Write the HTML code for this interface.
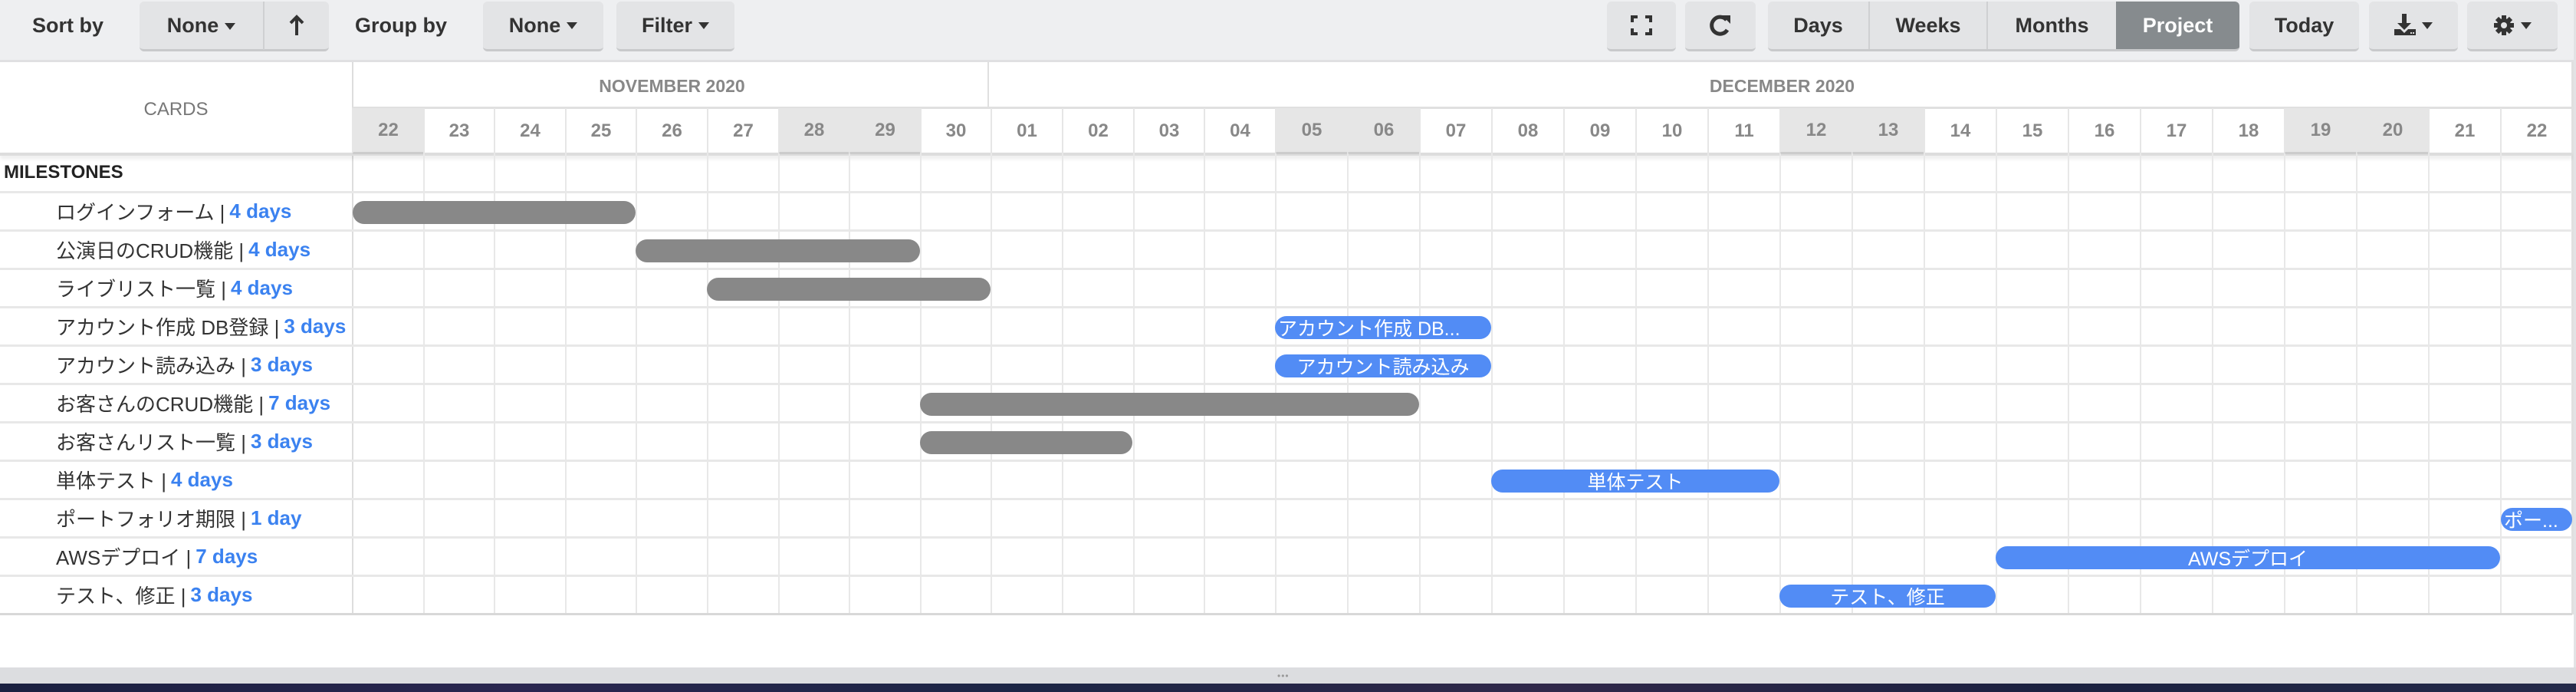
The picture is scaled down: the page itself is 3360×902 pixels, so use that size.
<!DOCTYPE html>
<html><head><meta charset="utf-8"><style>
*{box-sizing:border-box;margin:0;padding:0}
body{width:3360px;height:902px;overflow:hidden;background:#fff;font-family:"Liberation Sans","Noto Sans CJK JP",sans-serif;position:relative}
.a{position:absolute}
#tb{left:0;top:0;width:3360px;height:81px;background:#eeeff1;border-bottom:3px solid #e0e0e2}
.btn{position:absolute;top:2px;height:65px;background:#e3e4e6;border-radius:6px;border-bottom:3px solid #c8c9cb;font-size:27px;font-weight:bold;color:#333;display:flex;align-items:center;justify-content:center}
.lbl{position:absolute;top:18px;font-size:27px;font-weight:bold;color:#333}
.car{display:inline-block;width:0;height:0;border-left:7px solid transparent;border-right:7px solid transparent;border-top:9px solid #333;margin-left:8px;vertical-align:middle}
.hd{position:absolute;top:141px;height:60px;font-size:24px;font-weight:bold;color:#888;display:flex;align-items:center;justify-content:center;border-left:2px solid #e6e6e6}
.we{background:#e6e6e6;border-bottom:3px solid #ccc}
.vl{position:absolute;top:200px;height:601px;width:2px;background:#e8e8e8}
.hl{position:absolute;left:0;width:3355px;height:3px;background:#e8e8e8}
.row{position:absolute;left:73px;font-size:26px;color:#333;height:50px;display:flex;align-items:center}
.row b{color:#3b82f0;margin-left:6px}
.bar{position:absolute;height:30px;border-radius:15px;background:#888}
.bl{background:#528cf5;color:#fff;font-size:25px;display:flex;align-items:center;justify-content:center;white-space:nowrap;overflow:hidden}
</style></head><body>
<div id="tb" class="a"></div>
<div class="lbl" style="left:42px">Sort by</div>
<div class="btn" style="left:182px;width:247px;justify-content:flex-start">
 <span style="width:161px;text-align:center">None<span class="car"></span></span>
 <span style="width:2px;height:63px;background:#cfd0d2"></span>
 <span style="flex:1;display:flex;justify-content:center"><svg width="20" height="28" viewBox="0 0 20 28"><path d="M10 27V4M2 11l8-8 8 8" fill="none" stroke="#333" stroke-width="4"/></svg></span>
</div>
<div class="lbl" style="left:463px">Group by</div>
<div class="btn" style="left:630px;width:157px">None<span class="car"></span></div>
<div class="btn" style="left:804px;width:154px">Filter<span class="car"></span></div>

<div class="btn" style="left:2096px;width:90px"><svg width="28" height="26" viewBox="0 0 28 26"><path d="M2 9V2h7M19 2h7v7M26 17v7h-7M9 24H2v-7" fill="none" stroke="#333" stroke-width="4"/></svg></div>
<div class="btn" style="left:2198px;width:92px"><svg width="30" height="30" viewBox="0 0 30 30"><path d="M23 8A11 11 0 1 0 24 21" fill="none" stroke="#333" stroke-width="5"/><path d="M17 2h11v11z" fill="#333"/></svg></div>
<div class="btn" style="left:2306px;width:615px;justify-content:flex-start;overflow:hidden">
 <span style="width:131px;text-align:center">Days</span><span style="width:2px;height:63px;background:#cfd0d2"></span>
 <span style="width:152px;text-align:center">Weeks</span><span style="width:2px;height:63px;background:#cfd0d2"></span>
 <span style="width:167px;text-align:center">Months</span>
 <span style="width:161px;height:65px;background:#868b8e;color:#fff;display:flex;align-items:center;justify-content:center">Project</span>
</div>
<div class="btn" style="left:2934px;width:143px">Today</div>
<div class="btn" style="left:3090px;width:116px"><svg width="28" height="30" viewBox="0 0 28 30"><path d="M10 0h6v12h6l-9 9-9-9h6z" fill="#333"/><path d="M0 20h8l5 5 5-5h10v8H0z" fill="#333"/><rect x="21" y="24" width="2" height="2" fill="#ddd"/><rect x="24" y="24" width="2" height="2" fill="#ddd"/></svg><span class="car"></span></div>
<div class="btn" style="left:3218px;width:118px"><svg width="28" height="30" viewBox="0 0 28 28"><circle cx="14" cy="14" r="9" fill="#333"/><g stroke="#333" stroke-width="6"><path d="M14 1v26M1 14h26M5 5l18 18M23 5L5 23"/></g><circle cx="14" cy="14" r="4" fill="#e3e4e6"/></svg><span class="car"></span></div>

<div class="a" style="left:0;top:84px;width:459px;height:117px;display:flex;align-items:center;justify-content:center;font-size:24px;color:#777">CARDS</div>
<div class="a" style="left:459px;top:81px;width:2px;height:720px;background:#ddd"></div>
<div class="a" style="left:461px;top:84px;width:831px;height:57px;display:flex;align-items:center;justify-content:center;font-size:23px;font-weight:bold;color:#888">NOVEMBER 2020</div>
<div class="a" style="left:1288px;top:81px;width:2px;height:60px;background:#e0e0e0"></div>
<div class="a" style="left:1294px;top:84px;width:2061px;height:57px;display:flex;align-items:center;justify-content:center;font-size:23px;font-weight:bold;color:#888">DECEMBER 2020</div>
<div class="a" style="left:459px;top:139px;width:2896px;height:3px;background:#e0e0e0"></div>
<div class="a" style="left:3354px;top:81px;width:3px;height:720px;background:#e0e0e0"></div>
<div class="a" style="left:0;top:199px;width:3355px;height:4px;background:#ddd;box-shadow:0 3px 6px rgba(0,0,0,.12)"></div>

<div class="hd we" style="left:459px;width:93px">22</div>
<div class="hd" style="left:552px;width:92px">23</div>
<div class="hd" style="left:644px;width:93px">24</div>
<div class="hd" style="left:737px;width:92px">25</div>
<div class="hd" style="left:829px;width:93px">26</div>
<div class="hd" style="left:922px;width:93px">27</div>
<div class="hd we" style="left:1015px;width:92px">28</div>
<div class="hd we" style="left:1107px;width:93px">29</div>
<div class="hd" style="left:1200px;width:92px">30</div>
<div class="hd" style="left:1292px;width:93px">01</div>
<div class="hd" style="left:1385px;width:93px">02</div>
<div class="hd" style="left:1478px;width:92px">03</div>
<div class="hd" style="left:1570px;width:93px">04</div>
<div class="hd we" style="left:1663px;width:94px">05</div>
<div class="hd we" style="left:1757px;width:94px">06</div>
<div class="hd" style="left:1851px;width:94px">07</div>
<div class="hd" style="left:1945px;width:94px">08</div>
<div class="hd" style="left:2039px;width:94px">09</div>
<div class="hd" style="left:2133px;width:94px">10</div>
<div class="hd" style="left:2227px;width:94px">11</div>
<div class="hd we" style="left:2321px;width:94px">12</div>
<div class="hd we" style="left:2415px;width:94px">13</div>
<div class="hd" style="left:2509px;width:94px">14</div>
<div class="hd" style="left:2603px;width:94px">15</div>
<div class="hd" style="left:2697px;width:94px">16</div>
<div class="hd" style="left:2791px;width:94px">17</div>
<div class="hd" style="left:2885px;width:94px">18</div>
<div class="hd we" style="left:2979px;width:94px">19</div>
<div class="hd we" style="left:3073px;width:94px">20</div>
<div class="hd" style="left:3167px;width:94px">21</div>
<div class="hd" style="left:3261px;width:94px">22</div>

<div class="vl" style="left:552px"></div><div class="vl" style="left:644px"></div><div class="vl" style="left:737px"></div><div class="vl" style="left:829px"></div><div class="vl" style="left:922px"></div><div class="vl" style="left:1015px"></div><div class="vl" style="left:1107px"></div><div class="vl" style="left:1200px"></div><div class="vl" style="left:1292px"></div><div class="vl" style="left:1385px"></div><div class="vl" style="left:1478px"></div><div class="vl" style="left:1570px"></div><div class="vl" style="left:1663px"></div><div class="vl" style="left:1757px"></div><div class="vl" style="left:1851px"></div><div class="vl" style="left:1945px"></div><div class="vl" style="left:2039px"></div><div class="vl" style="left:2133px"></div><div class="vl" style="left:2227px"></div><div class="vl" style="left:2321px"></div><div class="vl" style="left:2415px"></div><div class="vl" style="left:2509px"></div><div class="vl" style="left:2603px"></div><div class="vl" style="left:2697px"></div><div class="vl" style="left:2791px"></div><div class="vl" style="left:2885px"></div><div class="vl" style="left:2979px"></div><div class="vl" style="left:3073px"></div><div class="vl" style="left:3167px"></div><div class="vl" style="left:3261px"></div>
<div class="hl" style="top:249px"></div><div class="hl" style="top:299px"></div><div class="hl" style="top:349px"></div><div class="hl" style="top:399px"></div><div class="hl" style="top:449px"></div><div class="hl" style="top:499px"></div><div class="hl" style="top:549px"></div><div class="hl" style="top:599px"></div><div class="hl" style="top:649px"></div><div class="hl" style="top:699px"></div><div class="hl" style="top:749px"></div>
<div class="hl" style="top:799px;background:#d8d8d8"></div>

<div class="a" style="left:5px;top:200px;height:50px;display:flex;align-items:center;font-size:24px;font-weight:bold;color:#222">MILESTONES</div>
<div class="row" style="top:250px">ログインフォーム |<b>4 days</b></div>
<div class="row" style="top:300px">公演日のCRUD機能 |<b>4 days</b></div>
<div class="row" style="top:350px">ライブリスト一覧 |<b>4 days</b></div>
<div class="row" style="top:400px">アカウント作成 DB登録 |<b>3 days</b></div>
<div class="row" style="top:450px">アカウント読み込み |<b>3 days</b></div>
<div class="row" style="top:500px">お客さんのCRUD機能 |<b>7 days</b></div>
<div class="row" style="top:550px">お客さんリスト一覧 |<b>3 days</b></div>
<div class="row" style="top:600px">単体テスト |<b>4 days</b></div>
<div class="row" style="top:650px">ポートフォリオ期限 |<b>1 day</b></div>
<div class="row" style="top:700px">AWSデプロイ |<b>7 days</b></div>
<div class="row" style="top:750px">テスト、修正 |<b>3 days</b></div>

<div class="bar" style="left:460px;top:262px;width:369px"></div>
<div class="bar" style="left:829px;top:312px;width:371px"></div>
<div class="bar" style="left:922px;top:362px;width:370px"></div>
<div class="bar bl" style="left:1663px;top:412px;width:282px;justify-content:flex-start;padding-left:4px">アカウント作成 DB...</div>
<div class="bar bl" style="left:1663px;top:462px;width:282px">アカウント読み込み</div>
<div class="bar" style="left:1200px;top:512px;width:651px"></div>
<div class="bar" style="left:1200px;top:562px;width:277px"></div>
<div class="bar bl" style="left:1945px;top:612px;width:376px">単体テスト</div>
<div class="bar bl" style="left:3262px;top:662px;width:93px;justify-content:flex-start;padding-left:4px">ポー...</div>
<div class="bar bl" style="left:2603px;top:712px;width:658px">AWSデプロイ</div>
<div class="bar bl" style="left:2321px;top:762px;width:282px">テスト、修正</div>

<div class="a" style="left:0;top:870px;width:3360px;height:21px;background:#dcdde0"></div>
<div class="a" style="left:3357px;top:0;width:3px;height:870px;background:#e2e3e5"></div>
<div class="a" style="left:1666px;top:874px;font-size:12px;color:#999;letter-spacing:1px">•••</div>
<div class="a" style="left:0;top:891px;width:3360px;height:11px;background:linear-gradient(90deg,#1a2040,#2a2650 20%,#1c2545 40%,#30284a 60%,#1b2140 80%,#252a4a)"></div>
</body></html>
